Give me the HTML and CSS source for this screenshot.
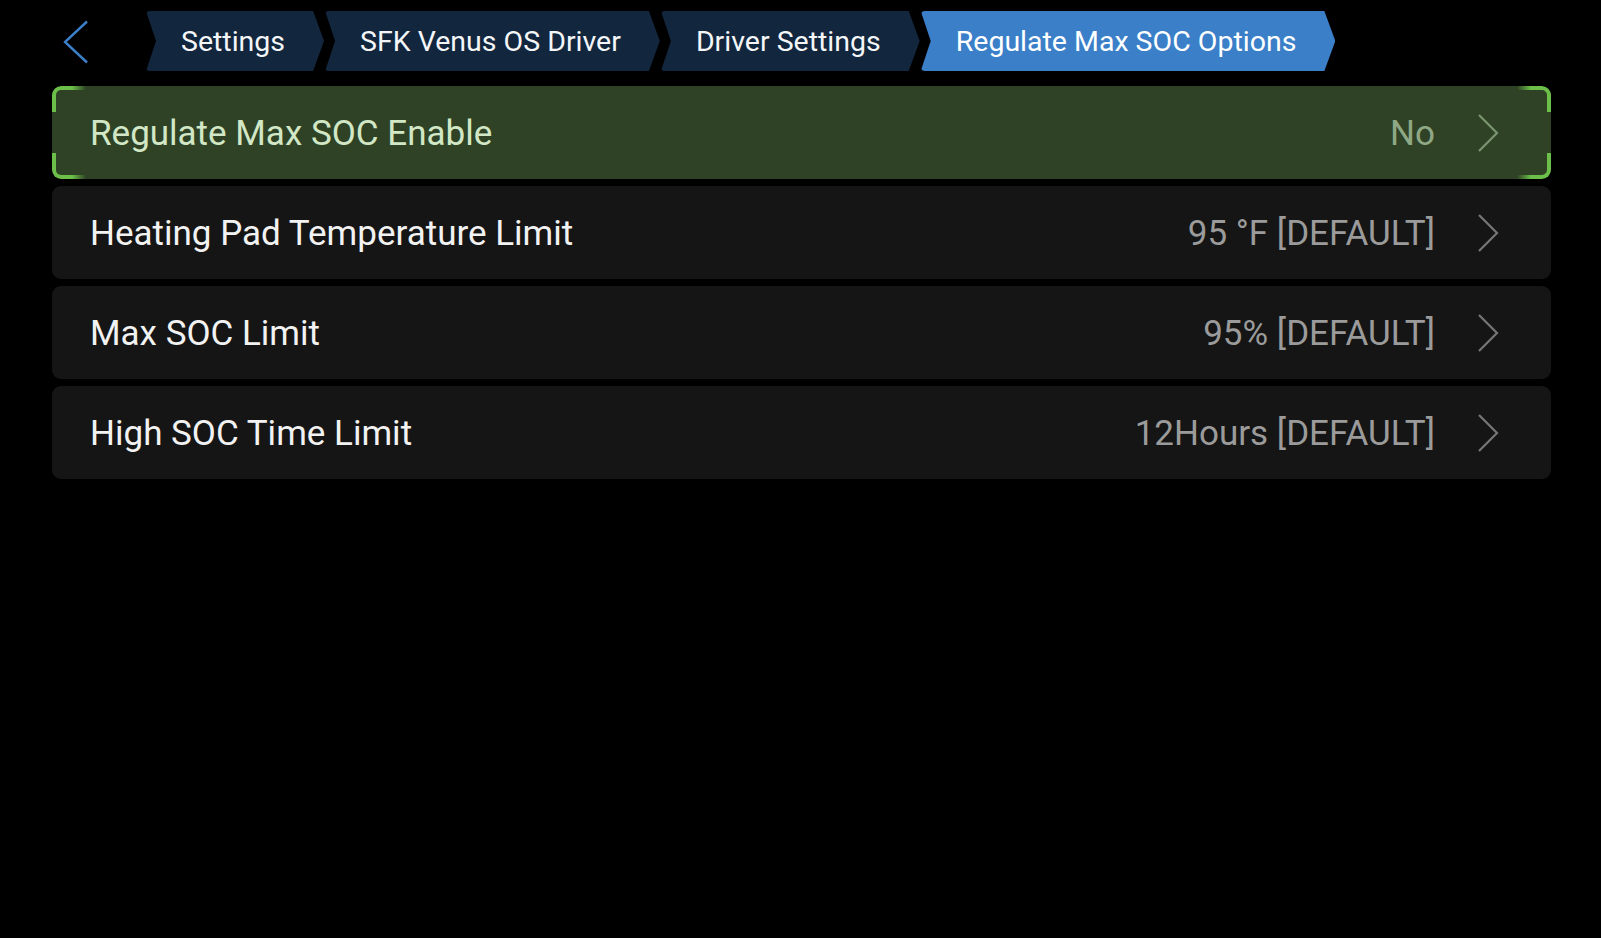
FILE: index.html
```html
<!DOCTYPE html>
<html lang="en">
<head>
<meta charset="utf-8">
<title>Regulate Max SOC Options</title>
<link rel="stylesheet" href="styles.css">
</head>
<body>
<header class="topbar">
  <button class="back" aria-label="Back">
    <svg width="26" height="44" viewBox="0 0 26 44"><polyline points="24,1.5 2,22 24,42.5" fill="none" stroke="#3a7fc8" stroke-width="2.4" stroke-linejoin="miter"/></svg>
  </button>
  <nav class="crumbs">
    <div class="crumb">Settings</div>
    <div class="crumb">SFK Venus OS Driver</div>
    <div class="crumb">Driver Settings</div>
    <div class="crumb crumb-active">Regulate Max SOC Options</div>
  </nav>
</header>
<main class="list">
  <div class="row row-focus">
    <span class="label">Regulate Max SOC Enable</span>
    <span class="value">No</span>
    <svg class="chev" width="22" height="40" viewBox="0 0 22 40"><polyline points="2,2 20,20 2,38" fill="none" stroke="currentColor" stroke-width="2.2"/></svg>
  </div>
  <div class="row">
    <span class="label">Heating Pad Temperature Limit</span>
    <span class="value">95 °F [DEFAULT]</span>
    <svg class="chev" width="22" height="40" viewBox="0 0 22 40"><polyline points="2,2 20,20 2,38" fill="none" stroke="currentColor" stroke-width="2.2"/></svg>
  </div>
  <div class="row">
    <span class="label">Max SOC Limit</span>
    <span class="value">95% [DEFAULT]</span>
    <svg class="chev" width="22" height="40" viewBox="0 0 22 40"><polyline points="2,2 20,20 2,38" fill="none" stroke="currentColor" stroke-width="2.2"/></svg>
  </div>
  <div class="row">
    <span class="label">High SOC Time Limit</span>
    <span class="value">12Hours [DEFAULT]</span>
    <svg class="chev" width="22" height="40" viewBox="0 0 22 40"><polyline points="2,2 20,20 2,38" fill="none" stroke="currentColor" stroke-width="2.2"/></svg>
  </div>
</main>
</body>
</html>
```

FILE: styles.css
```css
* { box-sizing: border-box; }

html, body {
  margin: 0;
  padding: 0;
  background: #000;
  height: 100%;
}

body {
  font-family: Roboto, "Liberation Sans", sans-serif;
  color: #f2f2f2;
}

.topbar {
  display: flex;
  align-items: center;
  padding: 11px 0 0 63px;
  height: 71px;
}

.back {
  background: none;
  border: 0;
  padding: 0;
  width: 26px;
  height: 44px;
  display: flex;
  align-items: center;
  margin-right: 57px;
  margin-top: 1px;
}

.crumbs {
  display: flex;
  gap: 1px;
  height: 60px;
}

.crumb {
  height: 60px;
  display: flex;
  align-items: center;
  padding: 0 39px 0 35px;
  font-size: 28.5px;
  color: #f4f6f8;
  background: #12263e;
  clip-path: polygon(0 0, calc(100% - 11px) 0, 100% 50%, calc(100% - 11px) 100%, 0 100%, 10px 50%);
  border-radius: 4px;
  white-space: nowrap;
}

.crumb-active {
  background: #3a7fc8;
  color: #fff;
}

.list {
  display: flex;
  flex-direction: column;
  gap: 7px;
  margin: 15px 50px 0 52px;
}

.row {
  position: relative;
  height: 93px;
  display: flex;
  align-items: center;
  padding: 2px 52px 0 38px;
  background: #151515;
  border-radius: 9px;
  font-size: 35px;
}

.label {
  flex: 1;
  color: #f2f2f2;
}

.value {
  color: #9b9b9b;
  margin-right: 42px;
}

.chev {
  color: #767676;
  display: block;
  margin-top: -2px;
}

.row-focus {
  background: #2f4225;
}

.row-focus .label { color: #d2e7c6; }
.row-focus .value { color: #8fa886; }
.row-focus .chev { color: #7b9570; }

.row-focus::before,
.row-focus::after {
  content: "";
  position: absolute;
  left: 0;
  right: 0;
  height: 22px;
  border: 4px solid #6cc049;
  -webkit-mask-image: linear-gradient(to right, #000 0, #000 20px, transparent 34px, transparent calc(100% - 34px), #000 calc(100% - 20px), #000 100%);
  mask-image: linear-gradient(to right, #000 0, #000 20px, transparent 34px, transparent calc(100% - 34px), #000 calc(100% - 20px), #000 100%);
}

.row-focus::before {
  top: 0;
  border-bottom: 0;
  border-radius: 9px 9px 0 0;
}

.row-focus::after {
  bottom: 0;
  border-top: 0;
  border-radius: 0 0 9px 9px;
}
```
